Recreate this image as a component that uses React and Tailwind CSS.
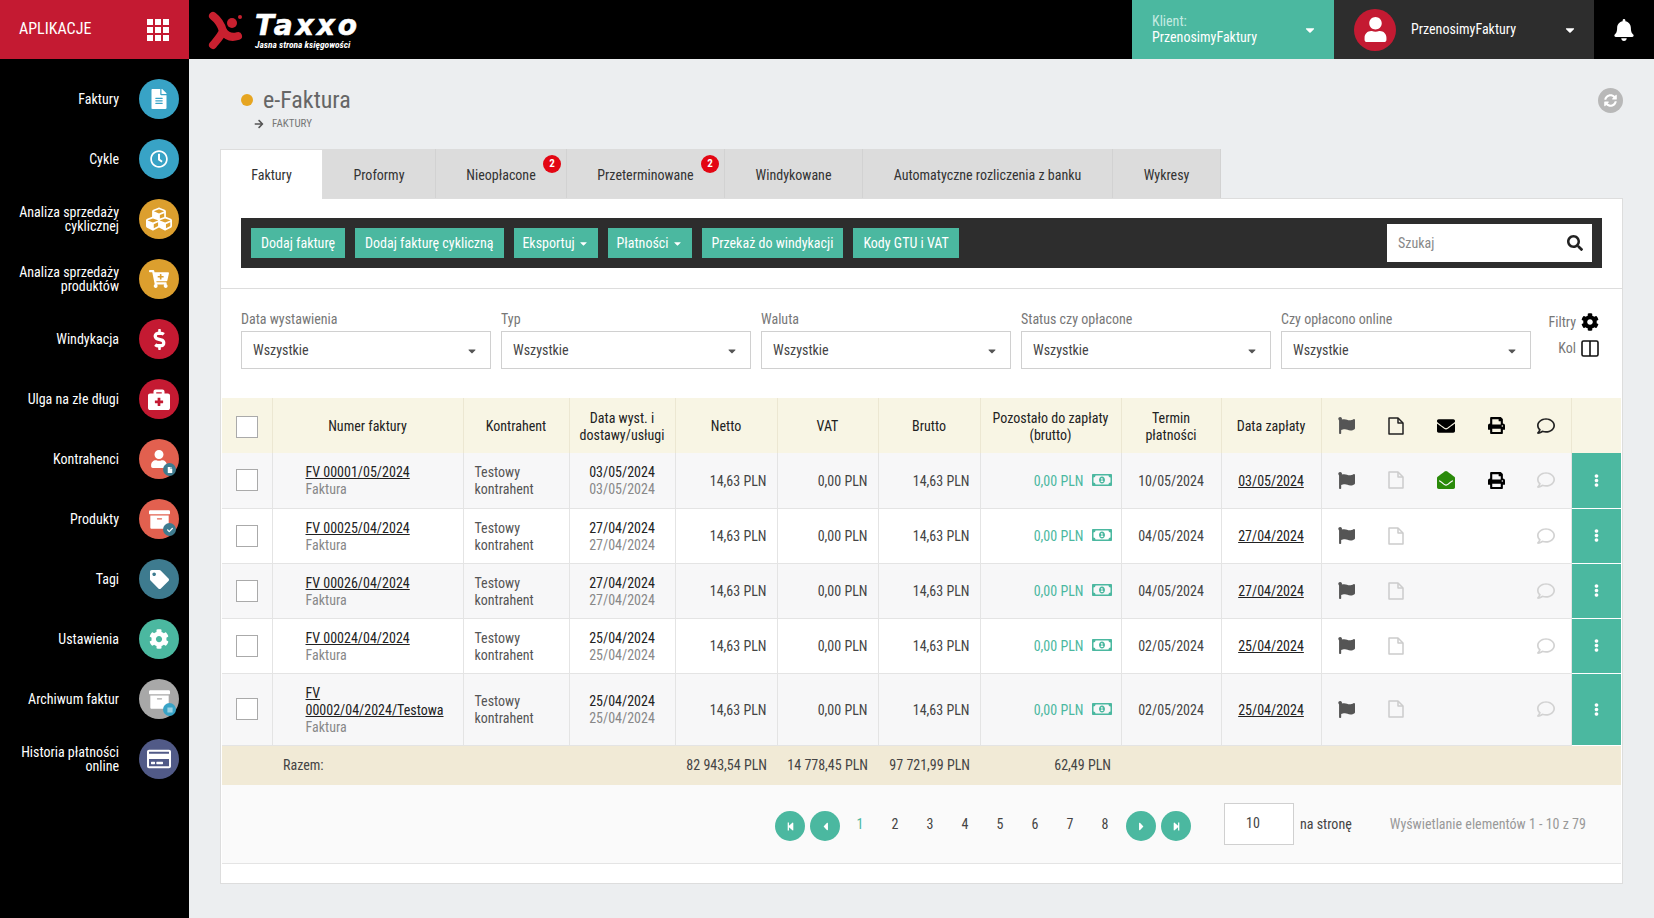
import React from 'react';
import {
  FaFileAlt, FaRegClock, FaCubes, FaCartPlus, FaDollarSign, FaBriefcaseMedical, FaUser, FaFile, FaArchive, FaCheck,
  FaTag, FaCog, FaBars, FaRegCreditCard, FaBell, FaSyncAlt, FaArrowRight, FaSearch, FaCaretDown, FaFlag,
  FaEnvelope, FaEnvelopeOpen, FaPrint, FaRegComment, FaRegMoneyBillAlt, FaEllipsisV, FaStepBackward, FaStepForward,
  FaCaretLeft, FaCaretRight,
} from 'react-icons/fa';

const menu = [
  { label: ['Faktury'], bg: 'bg-[#38a3c6]', icon: <FaFileAlt size={20} /> },
  { label: ['Cykle'], bg: 'bg-[#38a3c6]', icon: <FaRegClock size={18} /> },
  { label: ['Analiza sprzedaży', 'cyklicznej'], bg: 'bg-[#dc9f2e]', icon: <FaCubes size={26} /> },
  { label: ['Analiza sprzedaży', 'produktów'], bg: 'bg-[#dc9f2e]', icon: <FaCartPlus size={20} /> },
  { label: ['Windykacja'], bg: 'bg-[#c41a32]', icon: <FaDollarSign size={21} /> },
  { label: ['Ulga na złe długi'], bg: 'bg-[#c41a32]', icon: <FaBriefcaseMedical size={22} /> },
  { label: ['Kontrahenci'], bg: 'bg-[#e2604f]', icon: <FaUser size={18} />, badge: 'bg-[#3e7b8f]', badgeIcon: <FaFile size={6} /> },
  { label: ['Produkty'], bg: 'bg-[#e2604f]', icon: <FaArchive size={21} />, badge: 'bg-[#3e7b8f]', badgeIcon: <FaCheck size={6} /> },
  { label: ['Tagi'], bg: 'bg-[#3e7b8f]', icon: <FaTag size={19} /> },
  { label: ['Ustawienia'], bg: 'bg-[#4bb8a0]', icon: <FaCog size={20} /> },
  { label: ['Archiwum faktur'], bg: 'bg-[#a8a8a8]', icon: <FaArchive size={21} />, badge: 'bg-[#38a3c6]', badgeIcon: <FaBars size={6} /> },
  { label: ['Historia płatności', 'online'], bg: 'bg-[#515a87]', icon: <FaRegCreditCard size={24} /> },
];

const tabs = [
  { label: 'Faktury', w: 'w-[103px]', active: true },
  { label: 'Proformy', w: 'w-[113px]' },
  { label: 'Nieopłacone', w: 'w-[131px]', badge: true },
  { label: 'Przeterminowane', w: 'w-[158px]', badge: true },
  { label: 'Windykowane', w: 'w-[138px]' },
  { label: 'Automatyczne rozliczenia z banku', w: 'w-[250px]' },
  { label: 'Wykresy', w: 'w-[108px]' },
];

const filters = ['Data wystawienia', 'Typ', 'Waluta', 'Status czy opłacone', 'Czy opłacono online'];

const rows = [
  { nr: ['FV 00001/05/2024'], d: '03/05/2024', term: '10/05/2024', mail: true },
  { nr: ['FV 00025/04/2024'], d: '27/04/2024', term: '04/05/2024' },
  { nr: ['FV 00026/04/2024'], d: '27/04/2024', term: '04/05/2024' },
  { nr: ['FV 00024/04/2024'], d: '25/04/2024', term: '02/05/2024' },
  { nr: ['FV', '00002/04/2024/Testowa'], d: '25/04/2024', term: '02/05/2024', tall: true },
];

function Checkbox() {
  return <div className="mx-auto h-[22px] w-[22px] border border-[#aaaaaa] bg-white" />;
}

function DocIcon({ color }) {
  return (
    <svg width="16" height="18" viewBox="0 0 16 18" fill="none" stroke={color} strokeWidth="1.5" strokeLinejoin="round" className="mx-auto">
      <path d="M1 1h9l5 5v11H1z" />
      <path d="M10 1v5h5" />
    </svg>
  );
}

function Select() {
  return (
    <div className="flex h-[38px] items-center justify-between border border-[#d0d0d0] bg-white pl-[11px] pr-[12px] pt-[1px] text-[14px] text-[#444]">
      Wszystkie
      <FaCaretDown size={12} className="text-[#555]" />
    </div>
  );
}

function Logo() {
  return (
    <div className="ml-[18px] flex items-center gap-[10px]">
      <svg width="38" height="40" viewBox="0 0 38 40">
        <g fill="none" stroke="#c8202f" strokeWidth="8" strokeLinecap="round" strokeLinejoin="round">
          <path d="M6 6 C10 9 14 14 16 21 C14 26 10 30 6 35" />
          <path d="M16 21 C20 27 25 28 31 26" />
        </g>
        <circle cx="25" cy="13" r="5" fill="#c8202f" />
        <circle cx="33" cy="7" r="2" fill="#c8202f" />
      </svg>
      <div className="mt-[6px] flex flex-col text-white">
        <span className="[font-family:'DejaVu_Sans',sans-serif] text-[28px] leading-[24px] font-bold italic tracking-[3px] [font-stretch:100%] [-webkit-text-stroke:0.6px_white]">Taxxo</span>
        <span className="text-[9.5px] leading-[13px] font-bold italic">Jasna strona księgowości</span>
      </div>
    </div>
  );
}

function Header() {
  return (
    <header className="flex h-[59px] items-center bg-black text-white">
      <div className="flex h-full w-[189px] items-center justify-between bg-[#c41a32] pl-[19px] pr-[20px] text-[16px]">
        <span className="-mt-[2px]">APLIKACJE</span>
        <div className="grid grid-cols-3 gap-[2px]">
          {Array.from({ length: 9 }).map((_, i) => <span key={i} className="h-[6px] w-[6px] bg-white" />)}
        </div>
      </div>
      <Logo />
      <div className="ml-auto flex h-full w-[202px] items-center justify-between bg-[#4bb8a0] pl-[20px] pr-[17px] text-[14px] leading-[16px]">
        <div className="-mt-[2px]">
          <div className="text-[#c5ebe2]">Klient:</div>
          <div>PrzenosimyFaktury</div>
        </div>
        <FaCaretDown size={14} />
      </div>
      <div className="flex h-full w-[260px] items-center bg-[#2d2d2d] pl-[20px] pr-[17px] text-[14px]">
        <div className="flex h-[42px] w-[42px] items-center justify-center rounded-full bg-[#c41a32]"><FaUser size={25} /></div>
        <span className="ml-[15px]">PrzenosimyFaktury</span>
        <FaCaretDown size={14} className="ml-auto" />
      </div>
      <div className="flex h-full w-[60px] items-center justify-center"><FaBell size={22} /></div>
    </header>
  );
}

function Sidebar() {
  return (
    <aside className="w-[189px] shrink-0 bg-black pt-[10px] text-white">
      {menu.map((item) => (
        <div key={item.label.join(' ')} className="flex h-[60px] items-center justify-end gap-[20px] pr-[10px]">
          <div className="text-right text-[14px] leading-[14px]">
            {item.label.map((l) => <div key={l}>{l}</div>)}
          </div>
          <div className={`relative flex h-[40px] w-[40px] items-center justify-center rounded-full ${item.bg}`}>
            {item.icon}
            {item.badge && (
              <span className={`absolute bottom-[3px] right-[3px] flex h-[13px] w-[13px] items-center justify-center rounded-full ${item.badge}`}>
                {item.badgeIcon}
              </span>
            )}
          </div>
        </div>
      ))}
    </aside>
  );
}

function Tabs() {
  return (
    <div className="flex h-[49px]">
      {tabs.map((t) => (
        <div
          key={t.label}
          className={`relative flex items-center justify-center text-[14px] text-[#333] ${t.w} ${t.active ? 'z-10 -mb-px border-x border-t border-[#dddddd] bg-white pt-[1px]' : 'border-r border-[#d2d2d2] bg-[#dcdcdc] pt-[3px]'}`}
        >
          {t.label}
          {t.badge && (
            <span className="absolute right-[5px] top-[6px] flex h-[18px] w-[18px] items-center justify-center rounded-full bg-[#e30613] text-[11px] font-bold text-white">2</span>
          )}
        </div>
      ))}
    </div>
  );
}

function Toolbar() {
  const btn = 'flex h-[30px] items-center bg-[#4bb8a0] px-[10px] text-[14px] text-white';
  const drop = 'flex h-[30px] w-[84px] items-center justify-center bg-[#4bb8a0] text-[14px] text-white';
  return (
    <div className="mx-[20px] mt-[19px] flex h-[50px] items-center bg-[#2d2d2d] px-[10px]">
      <div className="flex gap-[10px]">
        <div className={btn}>Dodaj fakturę</div>
        <div className={btn}>Dodaj fakturę cykliczną</div>
        <div className={drop}>Eksportuj <FaCaretDown size={11} className="ml-[3px]" /></div>
        <div className={drop}>Płatności <FaCaretDown size={11} className="ml-[3px]" /></div>
        <div className={btn}>Przekaż do windykacji</div>
        <div className={btn}>Kody GTU i VAT</div>
      </div>
      <div className="ml-auto flex h-[38px] w-[205px] items-center justify-between bg-white pl-[11px] pr-[9px] text-[14px] text-[#888]">
        Szukaj
        <FaSearch size={16} className="text-[#222]" />
      </div>
    </div>
  );
}

function Filters() {
  return (
    <div className="mt-[20px] flex h-[110px] gap-[10px] border-t border-[#dddddd] pl-[20px] pt-[22px]">
      {filters.map((f) => (
        <div key={f} className="w-[250px]">
          <div className="mb-[4px] h-[16px] text-[14px] leading-[16px] text-[#777]">{f}</div>
          <Select />
        </div>
      ))}
      <div className="mt-[2px] flex w-[60px] flex-col items-end gap-[8px] pr-[2px] text-[14px] text-[#777]">
        <div className="flex h-[18px] items-center gap-[5px]">Filtry <FaCog size={18} className="text-black" /></div>
        <div className="flex h-[18px] items-center gap-[5px]">
          Kol
          <svg width="18" height="17" viewBox="0 0 18 17" fill="none" stroke="#111" strokeWidth="1.6"><rect x="1" y="1" width="16" height="15" rx="1.5" /><path d="M9 1v15" /></svg>
        </div>
      </div>
    </div>
  );
}

function InvoiceTable() {
  const th = 'border-r border-[#ece7d2] px-[6px] pt-[2px] text-center text-[14px] leading-[17px] font-normal text-[#222]';
  const td = 'border-r border-[#e4e4e4] pt-[2px] text-[14px] leading-[17px]';
  const num = `${td} pr-[10px] text-right text-[#444]`;
  const widths = ['w-[50px]', 'w-[191px]', 'w-[106px]', 'w-[106px]', 'w-[102px]', 'w-[101px]', 'w-[102px]', 'w-[141px]', 'w-[100px]', 'w-[100px]', 'w-[50px]', 'w-[50px]', 'w-[50px]', 'w-[50px]', 'w-[50px]', 'w-[50px]'];
  return (
    <table className="ml-px w-[1399px] table-fixed border-collapse">
      <colgroup>{widths.map((w, i) => <col key={i} className={w} />)}</colgroup>
      <thead>
        <tr className="h-[55px] bg-[#f8f5e4]">
          <th className={th}><Checkbox /></th>
          <th className={th}>Numer faktury</th>
          <th className={th}>Kontrahent</th>
          <th className={th}>Data wyst. i<br />dostawy/usługi</th>
          <th className={th}>Netto</th>
          <th className={th}>VAT</th>
          <th className={th}>Brutto</th>
          <th className={th}>Pozostało do zapłaty<br />(brutto)</th>
          <th className={th}>Termin<br />płatności</th>
          <th className={th}>Data zapłaty</th>
          <th><FaFlag size={17} className="mx-auto text-[#555]" /></th>
          <th><DocIcon color="#222222" /></th>
          <th><FaEnvelope size={18} className="mx-auto text-black" /></th>
          <th><FaPrint size={17} className="mx-auto text-black" /></th>
          <th className="border-r border-[#ece7d2]"><FaRegComment size={18} className="mx-auto text-[#222]" /></th>
          <th />
        </tr>
      </thead>
      <tbody>
        {rows.map((r, i) => (
          <tr key={r.nr.join('')} className={`border-b border-[#e4e4e4] ${r.tall ? 'h-[72px]' : 'h-[55px]'} ${i % 2 === 0 ? 'bg-[#f7f7f8]' : 'bg-white'}`}>
            <td className="border-r border-[#e4e4e4]"><Checkbox /></td>
            <td className={`${td} pl-[33px] text-[#888]`}>
              {r.nr.map((n) => <div key={n} className="text-[#222] underline">{n}</div>)}
              Faktura
            </td>
            <td className={`${td} pl-[11px] text-[#555]`}>Testowy<br />kontrahent</td>
            <td className={`${td} text-center text-[#888]`}><div className="text-[#222]">{r.d}</div>{r.d}</td>
            <td className={num}>14,63 PLN</td>
            <td className={num}>0,00 PLN</td>
            <td className={num}>14,63 PLN</td>
            <td className={`${td} pr-[9px] text-[#4bb8a0]`}>
              <div className="flex items-center justify-end gap-[8px]">0,00 PLN <FaRegMoneyBillAlt size={20} className="mb-[3px]" /></div>
            </td>
            <td className={`${td} text-center text-[#444]`}>{r.term}</td>
            <td className={`${td} text-center text-[#222] underline`}>{r.d}</td>
            <td><FaFlag size={17} className="mx-auto text-[#555]" /></td>
            <td><DocIcon color="#cccccc" /></td>
            <td>{r.mail && <FaEnvelopeOpen size={18} className="mx-auto text-[#2a8a0a]" />}</td>
            <td>{r.mail && <FaPrint size={17} className="mx-auto text-black" />}</td>
            <td className="border-r border-[#e4e4e4]"><FaRegComment size={18} className="mx-auto text-[#d2d2d2]" /></td>
            <td className="border-b border-white bg-[#4bb8a0]"><FaEllipsisV size={13} className="mx-auto text-white" /></td>
          </tr>
        ))}
        <tr className="h-[40px] bg-[#f1ead6] text-[14px] text-[#444]">
          <td />
          <td colSpan={3} className="pl-[11px]">Razem:</td>
          <td className="pr-[10px] text-right">82 943,54 PLN</td>
          <td className="pr-[10px] text-right">14 778,45 PLN</td>
          <td className="pr-[10px] text-right">97 721,99 PLN</td>
          <td className="pr-[10px] text-right">62,49 PLN</td>
          <td colSpan={8} />
        </tr>
      </tbody>
    </table>
  );
}

function Pager() {
  const circle = 'flex h-[30px] w-[30px] items-center justify-center rounded-full bg-[#4bb8a0] text-white';
  return (
    <div className="ml-px flex h-[79px] w-[1399px] items-center border-b border-[#e4e4e4] bg-[#fafafa] pl-[553px] pt-[4px] text-[14px]">
      <div className="flex gap-[5px]">
        <div className={circle}><FaStepBackward size={9} /></div>
        <div className={circle}><FaCaretLeft size={13} /></div>
        {[1, 2, 3, 4, 5, 6, 7, 8].map((n) => (
          <div key={n} className={`flex h-[30px] w-[30px] items-center justify-center pb-[4px] ${n === 1 ? 'text-[#4bb8a0]' : 'text-[#444]'}`}>{n}</div>
        ))}
        <div className={`${circle} ml-px`}><FaCaretRight size={13} /></div>
        <div className={circle}><FaStepForward size={9} /></div>
      </div>
      <div className="-mt-[5px] ml-[33px] flex h-[42px] w-[70px] items-center border border-[#d0d0d0] bg-white pl-[21px] text-[#444]">10</div>
      <span className="-mt-[4px] ml-[6px] text-[#444]">na stronę</span>
      <span className="-mt-[4px] ml-[38px] text-[#999]">Wyświetlanie elementów 1 - 10 z 79</span>
    </div>
  );
}

export default function App() {
  return (
    <div className="flex h-[918px] w-[1654px] flex-col overflow-hidden [font-family:Roboto,sans-serif] [font-stretch:75%]">
      <Header />
      <div className="flex flex-1">
        <Sidebar />
        <main className="flex-1 bg-[#eceef0] pl-[31px] pr-[31px]">
          <div className="relative h-[90px] pt-[27px]">
            <div className="flex items-center">
              <span className="ml-[21px] h-[12px] w-[12px] rounded-full bg-[#e6a521]" />
              <h1 className="ml-[10px] text-[24px] leading-[28px] text-[#666]">e-Faktura</h1>
            </div>
            <div className="ml-[34px] mt-[2px] flex items-center gap-[8px] text-[11px] text-[#777]">
              <FaArrowRight size={10} className="text-[#555]" /> FAKTURY
            </div>
            <div className="absolute right-[0px] top-[29px] flex h-[25px] w-[25px] items-center justify-center rounded-full bg-[#b8b8b8] text-white">
              <FaSyncAlt size={13} />
            </div>
          </div>
          <Tabs />
          <section className="h-[686px] border border-[#dddddd] bg-white">
            <Toolbar />
            <Filters />
            <InvoiceTable />
            <Pager />
          </section>
        </main>
      </div>
    </div>
  );
}
